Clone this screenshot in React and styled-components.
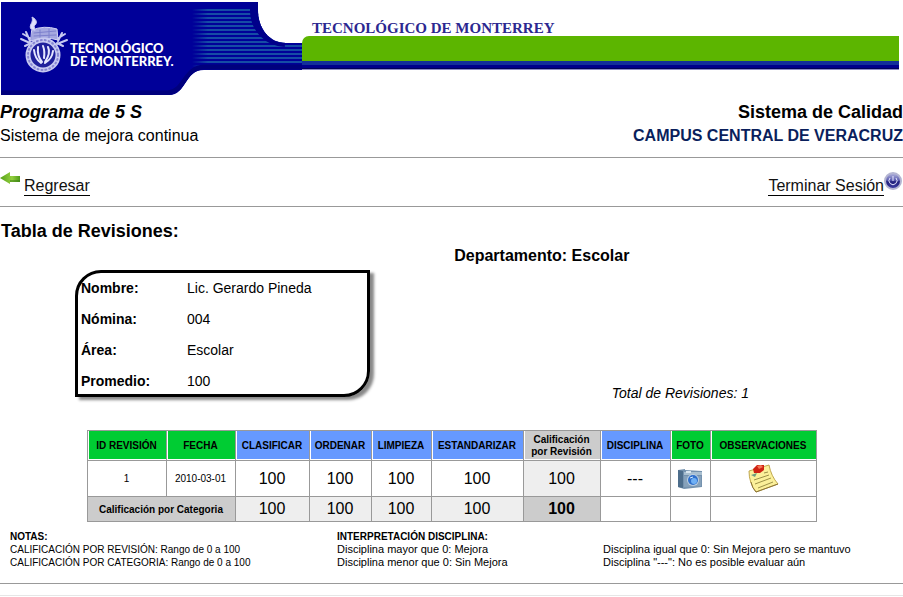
import React from "react";
import styled, { createGlobalStyle } from "styled-components";

const GlobalStyle = createGlobalStyle`
  * { box-sizing: border-box; }
  body {
    margin: 0;
    background: #fff;
    color: #000;
    font-family: "Liberation Sans", Arial, sans-serif;
    font-size: 16px;
  }
`;

const Page = styled.main`
  display: flex;
  flex-direction: column;
`;

const Banner = styled.header`
  display: flex;
  align-items: flex-start;
  padding-right: 4px;
`;

const Emblem = styled.svg`
  flex: none;
  width: 302px;
  height: 96px;
  display: block;
`;

const BannerBody = styled.div`
  flex: 1;
  display: flex;
  flex-direction: column;
  padding-top: 18px;
`;

const BannerName = styled.div`
  padding-left: 10px;
  height: 18px;
  font: 700 15px/20px "Liberation Serif", serif;
  color: #2c2890;
  white-space: nowrap;
`;

const GreenBar = styled.div`
  height: 25px;
  background: #5cb500;
  border-top-left-radius: 7px;
`;

const BlueStripe = styled.div`
  height: 9px;
  background: linear-gradient(#12309a 0 4px, #00008c 4px 7px, #00005a 7px 8px, #8c8cc8 8px);
`;

const Split = styled.div`
  display: flex;
  justify-content: space-between;
  align-items: flex-start;
`;

const Program = styled(Split)`
  padding: 4px 0 10px;
`;

const TitleGroup = styled.div`
  text-align: ${(p) => (p.$end ? "right" : "left")};
`;

const Title = styled.h1`
  margin: 0;
  font-size: 18px;
  line-height: 24px;
  font-style: ${(p) => (p.$italic ? "italic" : "normal")};
`;

const Subtitle = styled.p`
  margin: 0;
  line-height: 23px;
  font-weight: ${(p) => (p.$campus ? 700 : 400)};
  color: ${(p) => (p.$campus ? "#0a1f5c" : "#000")};
`;

const Rule = styled.hr`
  width: 100%;
  margin: ${(p) => (p.$faint ? "11px 0 0" : "0")};
  border: 0;
  border-top: 1px solid ${(p) => (p.$faint ? "#e6e6e6" : "#999")};
`;

const Nav = styled(Split).attrs({ as: "nav" })`
  padding: 13px 0 10px;
`;

const NavLink = styled.a`
  display: flex;
  align-items: flex-start;
  color: #111;
  text-decoration: none;
  gap: ${(p) => (p.$gap ? "4px" : "0")};
  svg { flex: none; display: block; }
`;

const NavText = styled.span`
  margin-top: 6px;
  border-bottom: 1px solid #000;
  line-height: 18px;
`;

const Heading = styled.h2`
  margin: 13px 0 0 1px;
  font-size: 18px;
  line-height: 22px;
`;

const Department = styled.h3`
  margin: 3px 0 0;
  padding-left: 20%;
  text-align: center;
  font-size: 16px;
  line-height: 22px;
`;

const Summary = styled.section`
  display: flex;
  justify-content: space-between;
  align-items: flex-end;
  padding: 3px 154px 28px 75px;
`;

const Card = styled.dl`
  width: 295px;
  margin: 0 0 5px;
  padding: 2px 0 0 3px;
  display: grid;
  grid-template-columns: 106px 1fr;
  row-gap: 5px;
  border: 3px solid #000;
  border-radius: 26px 0 26px 0;
  box-shadow: 4px 3px 3px #888;
  font-size: 14px;
  line-height: 26px;
`;

const Term = styled.dt`
  font-weight: 700;
`;

const Value = styled.dd`
  margin: 0;
`;

const Total = styled.p`
  margin: 0;
  font-size: 14px;
  line-height: 18px;
  font-style: italic;
`;

const Reviews = styled.table`
  width: 729px;
  margin: 0 auto;
  table-layout: fixed;
  border-collapse: collapse;
  text-align: center;
`;

const fills = {
  green: "#00cc33",
  blue: "#6699ff",
  gray: "#cccccc",
  light: "#eeeeee",
  none: "#ffffff",
};

const Head = styled.th`
  height: 30px;
  padding: 0 ${(p) => (p.$fill === "gray" ? "5px" : "0")};
  border: 1px solid #999;
  font-size: 10px;
  line-height: 12px;
  box-shadow: inset 1px -1px 0 #fff;
  background: ${(p) => fills[p.$fill]};
`;

const Cell = styled.td`
  height: ${(p) => (p.$sum ? "25px" : "36px")};
  padding: 0;
  border: 1px solid #999;
  font-size: ${(p) => (p.$small ? "10px" : "16px")};
  font-weight: ${(p) => (p.$bold ? 700 : 400)};
  background: ${(p) => fills[p.$fill || "none"]};
  svg { display: block; margin: 0 auto; }
`;

const Notes = styled.section`
  display: grid;
  grid-template-columns: 327px 266px 1fr;
  padding: 8px 0 14px 10px;
  line-height: 13px;
`;

const NoteTitle = styled.h4`
  margin: 0;
  font-size: 10px;
`;

const Note = styled.div`
  align-self: end;
  font-size: ${(p) => (p.$caps ? "10px" : "11px")};
  p { margin: 0; }
`;

const stripes = Array.from({ length: 15 }, (_, i) => 9 + i * 4);

function BannerEmblem() {
  return (
    <Emblem viewBox="0 0 302 96" role="img" aria-label="Tecnológico de Monterrey">
      <defs>
        <linearGradient id="fade" gradientUnits="userSpaceOnUse" x1="192" x2="208" y1="0" y2="0">
          <stop offset="0" stopColor="#154ca4" stopOpacity="0" />
          <stop offset="1" stopColor="#154ca4" />
        </linearGradient>
        <clipPath id="silhouette">
          <path d="M1 2H258V10C258 28 269 43 286 43H302V70H204C184 70 187 95 169 95H1Z" />
        </clipPath>
      </defs>
      <g clipPath="url(#silhouette)">
        <path d="M0 0H302V96H0Z" fill="#000099" />
        {stripes.map((y) => (
          <path key={y} d={`M192 ${y}H302v2H192Z`} fill="url(#fade)" />
        ))}
        <path d="M254 0V12C255 29 267 42 285 43" fill="none" stroke="#00008a" strokeWidth="8" />
        <path d="M302 67H205C184 67 185 92 168 93H0" fill="none" stroke="#00007d" strokeWidth="5" />
      </g>
      <g fill="none" stroke="#c7c9f1" strokeWidth="2" strokeLinecap="round">
        <path d="M23 34l7 4M21 39l9 4M26 32l4 9M25 46l6-3M65 34l-8 5M67 40l-10 4M62 33l-4 8M63 46l-6-3" />
        <path d="M32 30q12-5 25-1l1 11q-13-4-27 1z" fill="#a5a8e0" stroke="#d0d2f5" strokeWidth="1" />
        <path d="M34 33l22-2M34 36l22-1M40 30v9M49 29v9" stroke="#7d80cd" strokeWidth="1" />
        <path d="M31 29c-3-4 3-6 1-12 6 3 5 7 2 9l1 4z" fill="#e0e1fb" strokeWidth="1" />
        <circle cx="43" cy="55" r="15" fill="#20209c" strokeWidth="5" />
        <circle cx="43" cy="55" r="15" stroke="#8786d2" strokeWidth="2" strokeDasharray="1 3" />
        <path d="M34 50q1 9 7 13M38 47q-1 9 4 15M43 46q2 5 1 12M48 47q3 6-3 15M53 51q-1 8-8 12" stroke="#e6e7ff" strokeWidth="2" />
      </g>
      <g fill="#fff" fontFamily="Lato, sans-serif" fontWeight="900" fontSize="13">
        <text x="70" y="53">TECNOLÓGICO</text>
        <text x="70" y="66">DE MONTERREY.</text>
      </g>
    </Emblem>
  );
}

function ArrowIcon() {
  return (
    <svg width="20" height="14" viewBox="0 0 20 14" aria-hidden="true">
      <defs>
        <linearGradient id="leaf" x2="1" y2="0">
          <stop stopColor="#55a018" />
          <stop offset=".6" stopColor="#93cf3e" />
          <stop offset="1" stopColor="#4f9a1a" />
        </linearGradient>
      </defs>
      <path d="M0 7L10 1V5H20V11H10V13Z" fill="url(#leaf)" />
      <path d="M10 10H20" stroke="#367c13" />
    </svg>
  );
}

function PowerIcon() {
  return (
    <svg width="19" height="20" viewBox="0 0 19 20" aria-hidden="true">
      <defs>
        <linearGradient id="orb" x2="0" y2="1">
          <stop stopColor="#b9bbe0" />
          <stop offset=".45" stopColor="#5c5db0" />
          <stop offset=".55" stopColor="#20207c" />
          <stop offset="1" stopColor="#4040a8" />
        </linearGradient>
      </defs>
      <circle cx="9" cy="10" r="8" fill="url(#orb)" stroke="#b4b5d2" strokeWidth="2" />
      <path d="M6 7a4 4 0 1 0 6 0M9 5v5" fill="none" stroke="#e8e8ff" />
    </svg>
  );
}

function CameraIcon() {
  return (
    <svg width="26" height="24" viewBox="0 0 26 24" role="img" aria-label="Foto">
      <path d="M1 3L8 2V3L25 4V20L7 22L1 20Z" fill="#7592ae" />
      <path d="M1 3L6 4V21L1 20Z" fill="#4d6d8b" />
      <path d="M7 5L25 5V8H7Z" fill="#a9bfd0" />
      <path d="M7 9h17v10L7 20Z" fill="#86a1ba" />
      <path d="M9 4h5v2H9z" fill="#d9e6ef" />
      <circle cx="16" cy="13" r="6" fill="#bccfe2" />
      <circle cx="16" cy="13" r="5" fill="#2f6fcb" />
      <circle cx="17" cy="14" r="3" fill="#6fb0f5" />
      <path d="M13 11l3-1" stroke="#d8ecff" />
    </svg>
  );
}

function NoteIcon() {
  return (
    <svg width="32" height="30" viewBox="0 0 32 30" role="img" aria-label="Observaciones">
      <path d="M2 7L22 1Q24 12 31 20L9 28Q2 19 2 7Z" fill="#fbf09a" stroke="#c0a74e" />
      <path d="M31 20L9 28Q5 24 4 18" fill="none" stroke="#8b7438" />
      <path d="M7 16L22 11M8 20L24 14M11 24L26 18M17 9l4-1" stroke="#9c9048" />
      <path d="M4 11l6-2-2 4z" fill="#6d9c7c" />
      <path d="M6 5L10 1L17 1V6L13 9L7 9Z" fill="#cf2212" />
      <path d="M10 2l4-1 2 2-4 2z" fill="#f47657" />
    </svg>
  );
}

const columns = [
  { label: "ID REVISIÓN", fill: "green", width: 79 },
  { label: "FECHA", fill: "green", width: 69 },
  { label: "CLASIFICAR", fill: "blue", width: 74 },
  { label: "ORDENAR", fill: "blue", width: 62 },
  { label: "LIMPIEZA", fill: "blue", width: 60 },
  { label: "ESTANDARIZAR", fill: "blue", width: 92 },
  { label: "Calificación por Revisión", fill: "gray", width: 77 },
  { label: "DISCIPLINA", fill: "blue", width: 70 },
  { label: "FOTO", fill: "green", width: 40 },
  { label: "OBSERVACIONES", fill: "green", width: 106 },
];

const person = [
  ["Nombre:", "Lic. Gerardo Pineda"],
  ["Nómina:", "004"],
  ["Área:", "Escolar"],
  ["Promedio:", "100"],
];

const scores = ["100", "100", "100", "100"];

export default function App() {
  return (
    <>
      <GlobalStyle />
      <Page>
        <Banner>
          <BannerEmblem />
          <BannerBody>
            <BannerName>TECNOLÓGICO DE MONTERREY</BannerName>
            <GreenBar />
            <BlueStripe />
          </BannerBody>
        </Banner>
        <Program>
          <TitleGroup>
            <Title $italic>Programa de 5 S</Title>
            <Subtitle>Sistema de mejora continua</Subtitle>
          </TitleGroup>
          <TitleGroup $end>
            <Title as="h2">Sistema de Calidad</Title>
            <Subtitle $campus>CAMPUS CENTRAL DE VERACRUZ</Subtitle>
          </TitleGroup>
        </Program>
        <Rule />
        <Nav>
          <NavLink href="#regresar" $gap>
            <ArrowIcon />
            <NavText>Regresar</NavText>
          </NavLink>
          <NavLink href="#salir">
            <NavText>Terminar Sesión</NavText>
            <PowerIcon />
          </NavLink>
        </Nav>
        <Rule />
        <Heading>Tabla de Revisiones:</Heading>
        <Department>Departamento: Escolar</Department>
        <Summary>
          <Card>
            {person.map(([term, value]) => (
              <React.Fragment key={term}>
                <Term>{term}</Term>
                <Value>{value}</Value>
              </React.Fragment>
            ))}
          </Card>
          <Total>Total de Revisiones: 1</Total>
        </Summary>
        <Reviews>
          <colgroup>
            {columns.map((c) => (
              <col key={c.label} width={c.width} />
            ))}
          </colgroup>
          <thead>
            <tr>
              {columns.map((c) => (
                <Head key={c.label} scope="col" $fill={c.fill}>{c.label}</Head>
              ))}
            </tr>
          </thead>
          <tbody>
            <tr>
              <Cell $small>1</Cell>
              <Cell $small>2010-03-01</Cell>
              {scores.map((s, i) => (
                <Cell key={i}>{s}</Cell>
              ))}
              <Cell $fill="light">100</Cell>
              <Cell>---</Cell>
              <Cell><CameraIcon /></Cell>
              <Cell><NoteIcon /></Cell>
            </tr>
            <tr>
              <Cell as="th" scope="row" colSpan={2} $sum $small $bold $fill="gray">Calificación por Categoria</Cell>
              {scores.map((s, i) => (
                <Cell key={i} $sum $fill="light">{s}</Cell>
              ))}
              <Cell $sum $bold $fill="gray">100</Cell>
              <Cell $sum />
              <Cell $sum />
              <Cell $sum />
            </tr>
          </tbody>
        </Reviews>
        <Notes>
          <Note $caps>
            <NoteTitle>NOTAS:</NoteTitle>
            <p>CALIFICACIÓN POR REVISIÓN: Rango de 0 a 100</p>
            <p>CALIFICACIÓN POR CATEGORIA: Rango de 0 a 100</p>
          </Note>
          <Note>
            <NoteTitle>INTERPRETACIÓN DISCIPLINA:</NoteTitle>
            <p>Disciplina mayor que 0: Mejora</p>
            <p>Disciplina menor que 0: Sin Mejora</p>
          </Note>
          <Note>
            <p>Disciplina igual que 0: Sin Mejora pero se mantuvo</p>
            <p>Disciplina "---": No es posible evaluar aún</p>
          </Note>
        </Notes>
        <Rule />
        <Rule $faint />
      </Page>
    </>
  );
}
